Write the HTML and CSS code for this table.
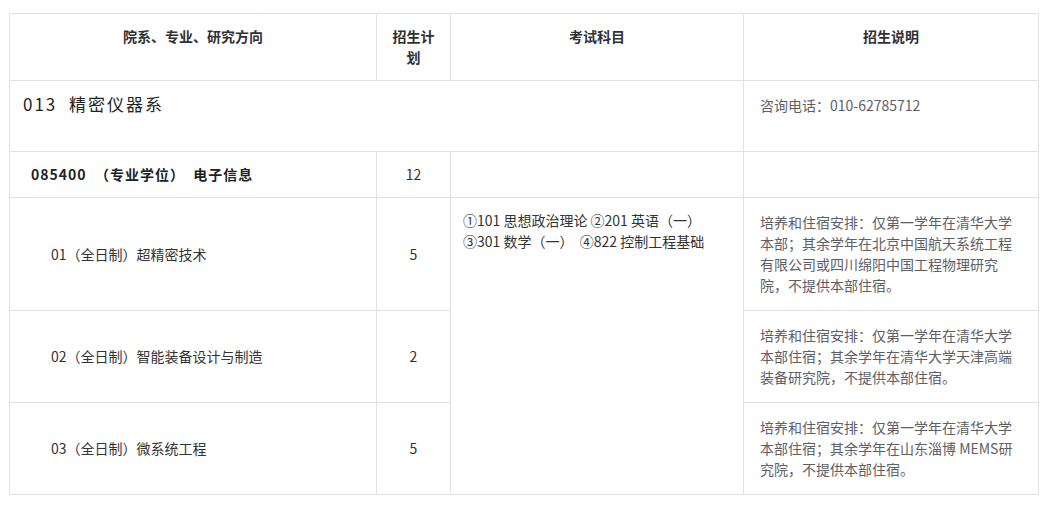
FILE: index.html
```html
<!DOCTYPE html>
<html lang="zh-CN">
<head>
<meta charset="utf-8">
<title>招生目录</title>
<link rel="stylesheet" href="styles.css">
</head>
<body>
<table class="plan">
  <colgroup>
    <col class="c-dept">
    <col class="c-num">
    <col class="c-exam">
    <col class="c-note">
  </colgroup>
  <thead>
    <tr class="r-head">
      <th>院系、专业、研究方向</th>
      <th class="th-num">招生计划</th>
      <th>考试科目</th>
      <th>招生说明</th>
    </tr>
  </thead>
  <tbody>
    <tr class="r-dept">
      <td colspan="3" class="dept">013&nbsp;&nbsp;精密仪器系</td>
      <td class="note top">咨询电话：010-62785712</td>
    </tr>
    <tr class="r-major">
      <td class="major">085400&nbsp;&nbsp;（专业学位）&nbsp;&nbsp;电子信息</td>
      <td class="num">12</td>
      <td></td>
      <td></td>
    </tr>
    <tr class="r-dir1">
      <td class="dir">01（全日制）超精密技术</td>
      <td class="num">5</td>
      <td rowspan="3" class="exam">①101 思想政治理论 ②201 英语（一）<br>③301 数学（一） &nbsp;④822 控制工程基础</td>
      <td class="note">培养和住宿安排：仅第一学年在清华大学本部；其余学年在北京中国航天系统工程有限公司或四川绵阳中国工程物理研究院，不提供本部住宿。</td>
    </tr>
    <tr class="r-dir">
      <td class="dir">02（全日制）智能装备设计与制造</td>
      <td class="num">2</td>
      <td class="note">培养和住宿安排：仅第一学年在清华大学本部住宿；其余学年在清华大学天津高端装备研究院，不提供本部住宿。</td>
    </tr>
    <tr class="r-dir">
      <td class="dir">03（全日制）微系统工程</td>
      <td class="num">5</td>
      <td class="note">培养和住宿安排：仅第一学年在清华大学本部住宿；其余学年在山东淄博 MEMS研究院，不提供本部住宿。</td>
    </tr>
  </tbody>
</table>
</body>
</html>
```

FILE: styles.css
```css
html, body {
  margin: 0;
  padding: 0;
  background: #ffffff;
}

body {
  font-family: "Noto Sans CJK SC", "Noto Sans", sans-serif;
  font-size: 14px;
  line-height: 21px;
  color: #333333;
}

.plan {
  margin: 13px 0 0 9px;
  width: 1029px;
  table-layout: fixed;
  border-collapse: collapse;
}

.c-dept { width: 367px; }
.c-num  { width: 74px; }
.c-exam { width: 293px; }
.c-note { width: 295px; }

.plan th,
.plan td {
  border: 1px solid #dfe1e7;
  padding: 0;
}

.plan th {
  font-weight: bold;
  color: #303133;
  text-align: center;
  vertical-align: top;
  padding: 12px 10px 12px;
}

.r-head  { height: 67px; }
.r-dept  { height: 71px; }
.r-major { height: 46px; }
.r-dir1  { height: 113px; }
.r-dir   { height: 92px; }

.dept {
  vertical-align: top;
  padding: 10px 12px 0 13px !important;
  font-size: 17px;
  line-height: 26px;
  letter-spacing: 2px;
  color: #222222;
}

.major {
  vertical-align: middle;
  padding-left: 21px !important;
  font-weight: bold;
  color: #222222;
  letter-spacing: 1px;
}

.dir {
  vertical-align: middle;
  padding-left: 41px !important;
  color: #333333;
}

.num {
  vertical-align: middle;
  text-align: center;
  color: #333333;
}

.exam {
  vertical-align: top;
  padding: 12px 8px 0 12px !important;
  color: #333333;
}

.note {
  vertical-align: middle;
  padding: 12px 16px 12px 16px !important;
  color: #5e6066;
}

.note.top {
  vertical-align: top;
  padding-top: 14px !important;
}
```
